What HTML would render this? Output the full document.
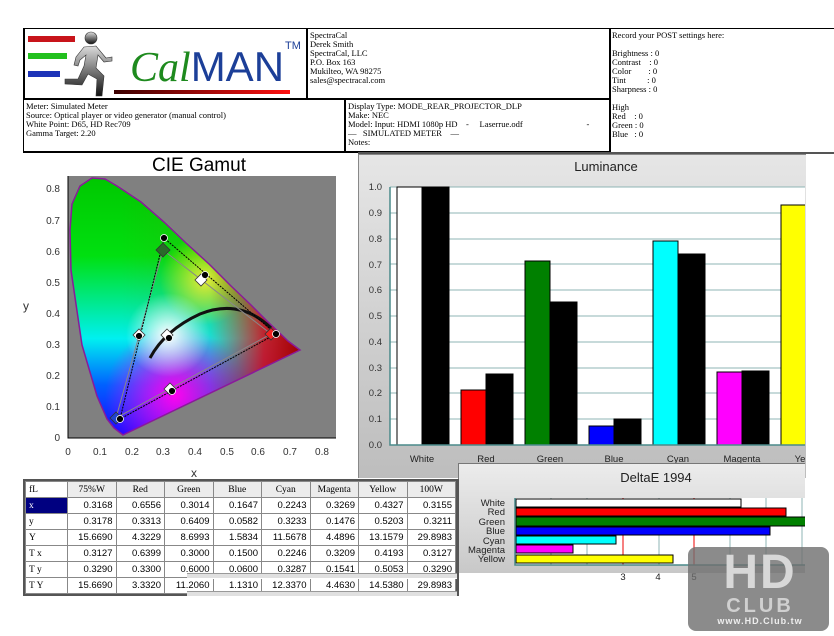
<!DOCTYPE html>
<html><head><meta charset="utf-8">
<style>
*{margin:0;padding:0;box-sizing:border-box}
body{width:834px;height:636px;background:#fff;position:relative;overflow:hidden;font-family:"Liberation Serif",serif;color:#000}
.abs{position:absolute}
.box{position:absolute;border:1px solid #000}
.t{font-size:8.5px;line-height:9px;white-space:pre;position:absolute}
table{border-collapse:collapse;font-family:"Liberation Sans",sans-serif;font-size:9.5px}
td{border:1px solid #888;height:16px;text-align:right;padding-right:3px;width:48.5px}
td.h{text-align:center;font-family:"Liberation Serif",serif;padding:0}
td.f{width:42px;text-align:left;padding-left:3px;font-family:"Liberation Serif",serif;background:#fff}
</style></head><body>

<!-- header -->
<div class="box" style="left:23px;top:28px;width:285px;height:72px;border-width:1px 2px 2px 2px"></div>
<div class="abs" style="left:28px;top:36px;width:47px;height:6px;background:#c8141a"></div>
<div class="abs" style="left:28px;top:53px;width:39px;height:6px;background:#22c01e"></div>
<div class="abs" style="left:28px;top:71px;width:32px;height:6px;background:#1d33b8"></div>
<svg class="abs" style="left:60px;top:30px" width="56" height="70" viewBox="0 0 56 70">
<defs><linearGradient id="rg" x1="0" y1="0" x2="0" y2="1"><stop offset="0" stop-color="#ddd"/><stop offset="1" stop-color="#111"/></linearGradient></defs>
<circle cx="31" cy="8" r="6" fill="url(#rg)" stroke="#333" stroke-width=".6"/>
<path d="M24 17 L36 16 L46 28 L52 27 L52 31 L44 32 L38 25 L36 38 L44 46 L42 66 L36 66 L37 49 L28 44 L22 55 L5 54 L5 49 L18 49 L24 36 L26 25 L20 30 L18 36 L14 35 L16 27 Z" fill="url(#rg)" stroke="#333" stroke-width=".6"/>
</svg>
<div class="abs" style="left:130px;top:44px;font-size:42px;line-height:46px;white-space:nowrap"><span style="font-family:'Liberation Serif',serif;font-style:italic;color:#1e8a1e">Cal</span><span style="font-family:'Liberation Sans',sans-serif;color:#1c3f98">MAN</span></div>
<div class="abs" style="left:285px;top:40px;font-family:'Liberation Sans',sans-serif;font-size:11px;color:#1c3f98">TM</div>
<div class="abs" style="left:114px;top:90px;width:176px;height:4px;background:linear-gradient(90deg,#3a0000,#ff1010)"></div>

<div class="box" style="left:307px;top:28px;width:304px;height:72px;border-width:1px 0 2px 1px"></div>
<div class="t" style="left:310px;top:31px">SpectraCal
Derek Smith
SpectraCal, LLC
P.O. Box 163
Mukilteo, WA 98275
sales@spectracal.com</div>

<div class="box" style="left:609px;top:28px;width:226px;height:125px;border-width:1px 0 1px 2px"></div>
<div class="t" style="left:612px;top:31px">Record your POST settings here:

Brightness : 0
Contrast    : 0
Color        : 0
Tint          : 0
Sharpness : 0

High
Red    : 0
Green : 0
Blue   : 0</div>

<div class="box" style="left:23px;top:99px;width:323px;height:54px;border-width:1px 2px 2px 1px"></div>
<div class="t" style="left:26px;top:102px">Meter: Simulated Meter
Source: Optical player or video generator (manual control)
White Point: D65, HD Rec709
Gamma Target: 2.20</div>
<div class="box" style="left:345px;top:99px;width:265px;height:54px;border-width:1px 0 2px 1px"></div>
<div class="t" style="left:348px;top:102px">Display Type: MODE_REAR_PROJECTOR_DLP
Make: NEC
Model: Input: HDMI 1080p HD    -     Laserrue.odf                              -
—   SIMULATED METER    —
Notes:</div>

<!-- CIE -->
<div class="abs" style="left:152px;top:155px;font-family:'Liberation Sans',sans-serif;font-size:19px">CIE Gamut</div>
<svg class="abs" style="left:0;top:150px" width="355" height="330" viewBox="0 150 355 330" font-family="Liberation Sans" font-size="10">
<defs>
<linearGradient id="v" x1="0" y1="178" x2="0" y2="437" gradientUnits="userSpaceOnUse"><stop offset="0" stop-color="#00c800"/><stop offset=".3" stop-color="#00e010"/><stop offset=".62" stop-color="#00f0f0"/><stop offset=".8" stop-color="#0060ff"/><stop offset="1" stop-color="#2000ff"/></linearGradient>
<linearGradient id="h" x1="120" y1="0" x2="300" y2="0" gradientUnits="userSpaceOnUse"><stop offset="0" stop-color="#f00" stop-opacity="0"/><stop offset=".5" stop-color="#ff4000" stop-opacity=".1"/><stop offset=".8" stop-color="#e00010" stop-opacity=".85"/><stop offset="1" stop-color="#a00000"/></linearGradient>
<radialGradient id="mg" cx="175" cy="395" r="70" gradientUnits="userSpaceOnUse"><stop offset="0" stop-color="#ff00ff"/><stop offset="1" stop-color="#ff00ff" stop-opacity="0"/></radialGradient>
<radialGradient id="yl" cx="205" cy="280" r="45" gradientUnits="userSpaceOnUse"><stop offset="0" stop-color="#ffff40" stop-opacity=".9"/><stop offset="1" stop-color="#ffff00" stop-opacity="0"/></radialGradient>
<radialGradient id="w" cx="168" cy="335" r="42" gradientUnits="userSpaceOnUse"><stop offset="0" stop-color="#fff"/><stop offset="1" stop-color="#fff" stop-opacity="0"/></radialGradient>
<clipPath id="loc"><path id="lp" d="M123 435 L114 428 L107 419 L97 396 L82 345 L71 270 L70 230 L72 204 L80 186 L92 178 L105 179 L117 186 L141 202 L164 222 L186 243 L209 264 L231 286 L251 305 L267 321 L288 341 L300 350 L123 435Z"/></clipPath>
</defs>
<rect x="68" y="176" width="268" height="262" fill="#808080"/>
<g clip-path="url(#loc)">
<rect x="60" y="170" width="250" height="270" fill="url(#v)"/>
<rect x="60" y="170" width="250" height="270" fill="url(#mg)"/>
<rect x="60" y="170" width="250" height="270" fill="url(#yl)"/>
<rect x="60" y="170" width="250" height="270" fill="url(#h)"/>
<rect x="60" y="170" width="250" height="270" fill="url(#w)"/>
</g>
<use href="#lp" fill="none" stroke="#8a1a9a" stroke-width="1.5"/>
<path d="M150 358 Q165 330 200 314 Q240 298 271 328" fill="none" stroke="#111" stroke-width="3"/>
<polygon points="271,334 163,250 116,418" fill="none" stroke="#888" stroke-width="1"/>
<polygon points="276,334 164,238 120,419" fill="none" stroke="#000" stroke-width="1" stroke-dasharray="2,1"/>
<g fill="#fff" stroke="#333" stroke-width=".8">
<path d="M139 329l6 6-6 6-6-6z"/><path d="M170 383l6 6-6 6-6-6z"/><path d="M201 274l6 6-6 6-6-6z"/><path d="M167 329l6 6-6 6-6-6z"/><path d="M116 412l6 6-6 6-6-6z" fill="#24c"/><path d="M271 328l6 6-6 6-6-6z" fill="#e22"/><path d="M163 243l7 7-7 7-7-7z" fill="#2a6a2a"/>
</g>
<g fill="#000" stroke="#fff" stroke-width=".8">
<circle cx="276" cy="334" r="3.5"/><circle cx="164" cy="238" r="3.5"/><circle cx="120" cy="419" r="3.5"/><circle cx="139" cy="336" r="3.5"/><circle cx="172" cy="391" r="3.5"/><circle cx="205" cy="275" r="3.5"/><circle cx="169" cy="338" r="3.5"/>
</g>
<path d="M68 176V438H336" fill="none" stroke="#000"/>
<g fill="#333" text-anchor="end">
<text x="60" y="441">0</text><text x="60" y="410">0.1</text><text x="60" y="379">0.2</text><text x="60" y="348">0.3</text><text x="60" y="317">0.4</text><text x="60" y="286">0.5</text><text x="60" y="255">0.6</text><text x="60" y="224">0.7</text><text x="60" y="192">0.8</text>
</g>
<g fill="#333" text-anchor="middle">
<text x="68" y="455">0</text><text x="100" y="455">0.1</text><text x="132" y="455">0.2</text><text x="163" y="455">0.3</text><text x="195" y="455">0.4</text><text x="227" y="455">0.5</text><text x="258" y="455">0.6</text><text x="290" y="455">0.7</text><text x="322" y="455">0.8</text>
<text x="194" y="477" font-size="12">x</text><text x="26" y="310" font-size="12">y</text>
</g>
</svg>

<!-- Luminance -->
<div class="abs" style="left:358px;top:154px;width:448px;height:324px;background:linear-gradient(#e6e6e6,#bdbdbd);border-left:1px solid #888;border-top:1px solid #888"></div>
<div class="abs" style="left:358px;top:152px;width:476px;height:2px;background:#555"></div>
<svg class="abs" style="left:355px;top:150px" width="450" height="330" viewBox="355 150 450 330" font-family="Liberation Sans" font-size="9.5">
<text x="606" y="171" text-anchor="middle" font-size="13" fill="#222">Luminance</text>
<rect x="390" y="187" width="415" height="258" fill="#fff"/>
<g stroke="#8fb4b4"><path d="M390 213H805M390 239H805M390 264H805M390 290H805M390 316H805M390 342H805M390 368H805M390 393H805M390 419H805M390 187H805"/></g>
<g stroke="#000" stroke-width="1">
<rect x="397" y="187" width="25" height="258" fill="#fff"/><rect x="422" y="187" width="27" height="258" fill="#000"/>
<rect x="461" y="390" width="25" height="55" fill="#f00"/><rect x="486" y="374" width="27" height="71" fill="#000"/>
<rect x="525" y="261" width="25" height="184" fill="#008000"/><rect x="550" y="302" width="27" height="143" fill="#000"/>
<rect x="589" y="426" width="25" height="19" fill="#00f"/><rect x="614" y="419" width="27" height="26" fill="#000"/>
<rect x="653" y="241" width="25" height="204" fill="#0ff"/><rect x="678" y="254" width="27" height="191" fill="#000"/>
<rect x="717" y="372" width="25" height="73" fill="#f0f"/><rect x="742" y="371" width="27" height="74" fill="#000"/>
<rect x="781" y="205" width="30" height="240" fill="#ff0"/>
</g>
<path d="M390 187V445H805" fill="none" stroke="#4a8a8a" stroke-width="1.5"/>
<g fill="#333" text-anchor="end">
<text x="382" y="448">0.0</text><text x="382" y="422">0.1</text><text x="382" y="396">0.2</text><text x="382" y="371">0.3</text><text x="382" y="345">0.4</text><text x="382" y="319">0.5</text><text x="382" y="293">0.6</text><text x="382" y="268">0.7</text><text x="382" y="242">0.8</text><text x="382" y="216">0.9</text><text x="382" y="190">1.0</text>
</g>
<g fill="#222" text-anchor="middle">
<text x="422" y="462">White</text><text x="486" y="462">Red</text><text x="550" y="462">Green</text><text x="614" y="462">Blue</text><text x="678" y="462">Cyan</text><text x="742" y="462">Magenta</text><text x="800" y="462">Ye</text>
</g>
</svg>

<!-- DeltaE -->
<div class="abs" style="left:458px;top:463px;width:347px;height:110px;background:linear-gradient(#ececec,#c8c8c8);border-left:1px solid #777;border-top:1px solid #777"></div>
<svg class="abs" style="left:455px;top:460px" width="350" height="120" viewBox="455 460 350 120" font-family="Liberation Sans" font-size="9.5">
<text x="656" y="482" text-anchor="middle" font-size="13" fill="#222">DeltaE 1994</text>
<rect x="515" y="498" width="290" height="67" fill="#fff"/>
<g stroke="#8fb4b4"><path d="M551 498V565M587 498V565M659 498V565M730 498V565M766 498V565M802 498V565"/></g>
<g stroke="#e00"><path d="M623 498V565M694 498V565"/></g>
<g stroke="#000" stroke-width="1">
<rect x="516" y="499" width="225" height="8" fill="#fff"/>
<rect x="516" y="508" width="270" height="8" fill="#f00"/>
<rect x="516" y="517" width="290" height="9" fill="#008000"/>
<rect x="516" y="527" width="254" height="8" fill="#00f"/>
<rect x="516" y="536" width="100" height="8" fill="#0ff"/>
<rect x="516" y="545" width="57" height="8" fill="#f0f"/>
<rect x="516" y="555" width="157" height="8" fill="#ff0"/>
</g>
<path d="M515 498V565H805" fill="none" stroke="#4a8a8a" stroke-width="1.5"/>
<g fill="#222" text-anchor="end">
<text x="505" y="506">White</text><text x="505" y="515">Red</text><text x="505" y="525">Green</text><text x="505" y="534">Blue</text><text x="505" y="544">Cyan</text><text x="505" y="553">Magenta</text><text x="505" y="562">Yellow</text>
</g>
<g fill="#222" text-anchor="middle"><text x="623" y="580">3</text><text x="658" y="580">4</text><text x="694" y="580">5</text></g>
</svg>

<!-- table -->
<div class="abs" style="left:23px;top:479px;border:2px solid #555;border-right-width:3px;background:#fff">
<table>
<tr style="background:#ececec"><td class="h f" style="text-align:left;padding-left:3px">fL</td><td class="h">75%W</td><td class="h">Red</td><td class="h">Green</td><td class="h">Blue</td><td class="h">Cyan</td><td class="h">Magenta</td><td class="h">Yellow</td><td class="h">100W</td></tr>
<tr><td class="f" style="background:#000080;color:#fff">x</td><td>0.3168</td><td>0.6556</td><td>0.3014</td><td>0.1647</td><td>0.2243</td><td>0.3269</td><td>0.4327</td><td>0.3155</td></tr>
<tr><td class="f">y</td><td>0.3178</td><td>0.3313</td><td>0.6409</td><td>0.0582</td><td>0.3233</td><td>0.1476</td><td>0.5203</td><td>0.3211</td></tr>
<tr><td class="f">Y</td><td>15.6690</td><td>4.3229</td><td>8.6993</td><td>1.5834</td><td>11.5678</td><td>4.4896</td><td>13.1579</td><td>29.8983</td></tr>
<tr><td class="f">T x</td><td>0.3127</td><td>0.6399</td><td>0.3000</td><td>0.1500</td><td>0.2246</td><td>0.3209</td><td>0.4193</td><td>0.3127</td></tr>
<tr><td class="f">T y</td><td>0.3290</td><td>0.3300</td><td>0.6000</td><td>0.0600</td><td>0.3287</td><td>0.1541</td><td>0.5053</td><td>0.3290</td></tr>
<tr><td class="f">T Y</td><td>15.6690</td><td>3.3320</td><td>11.2060</td><td>1.1310</td><td>12.3370</td><td>4.4630</td><td>14.5380</td><td>29.8983</td></tr>
</table></div>
<div class="abs" style="left:187px;top:573px;width:270px;height:6px;background:#e0e0e0;border-top:1px solid #999;border-bottom:1px solid #fff"></div>
<div class="abs" style="left:187px;top:591px;width:270px;height:5px;background:#e0e0e0;border-top:1px solid #999"></div>

<!-- watermark -->
<div class="abs" style="left:688px;top:547px;width:141px;height:84px;border-radius:8px;background:rgba(110,110,110,.8)"></div>
<div class="abs" style="left:700px;top:548px;width:120px;font-family:'Liberation Sans',sans-serif;font-weight:bold;color:#eee;text-align:center">
<div style="font-size:48px;line-height:50px;letter-spacing:2px;color:#d8d8d8">HD</div>
<div style="font-size:20px;line-height:16px;letter-spacing:3px;color:#d0d0d0">CLUB</div>
<div style="font-size:9px;line-height:14px;letter-spacing:1px">www.HD.Club.tw</div>
</div>
</body></html>
